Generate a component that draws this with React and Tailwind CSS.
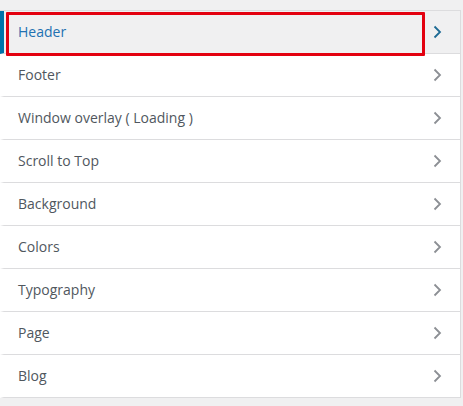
import React from 'react'

const items = ['Footer','Window overlay ( Loading )','Scroll to Top','Background','Colors','Typography','Page','Blog']

function Chevron({ className }){
  return (
    <svg width="10" height="16" viewBox="0 0 10 16" className={className} fill="none">
      <path d="M2.5 2.5 L8 8 L2.5 13.5" stroke="currentColor" strokeWidth="1.8" />
    </svg>
  )
}

export default function App(){
  return (
    <div className="w-[463px] h-[406px] bg-[#f0f0f1] pt-[10px] overflow-hidden" style={{fontFamily:'"Open Sans", "Noto Sans", sans-serif'}}>
      <ul className="w-[461px] border-t border-r border-[#dcdcde] bg-white">
        <li className="relative h-[43px] flex items-center justify-between bg-[#f0f0f1] border-l-4 border-[#0073aa] border-b border-b-[#dcdcde] pl-[14px] pr-[18px]">
          <span className="-mt-[2px] text-[14px] text-[#2271b1]">Header</span>
          <Chevron className="text-[#1d6a94]" />
          <div className="absolute left-[2px] top-[1px] w-[419px] h-[44px] border-[3px] border-[#e3000f] rounded-[1px]" />
        </li>
        {items.map((t,idx)=>(
          <li key={idx} className="h-[43px] flex items-center justify-between border-l-4 border-l-white border-b border-[#dcdcde] pl-[14px] pr-[18px]">
            <span className="-mt-[2px] text-[14px] text-[#50575e]">{t}</span>
            <Chevron className="text-[#8c8f94]" />
          </li>
        ))}
      </ul>
    </div>
  )
}
